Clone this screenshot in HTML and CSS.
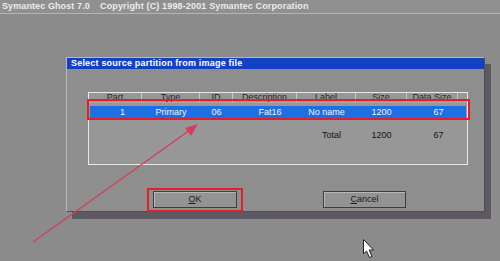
FILE: index.html
```html
<!DOCTYPE html>
<html lang="en">
<head>
    <meta charset="UTF-8">
    <meta name="viewport" content="width=device-width, initial-scale=1.0">
    <title>Symantec Ghost 7.0</title>
    <link rel="stylesheet" href="styles.css">
</head>
<body>
    <div class="topbar"><span class="product">Symantec Ghost 7.0</span><span class="copyright">Copyright (C) 1998-2001 Symantec Corporation</span></div>

    <div class="dialog">
        <div class="dialog-title">Select source partition from image file</div>
        <div class="dialog-body">
            <div class="table">
                <div class="row head">
                    <div>Part</div><div>Type</div><div>ID</div><div>Description</div><div>Label</div><div>Size</div><div>Data Size</div><div></div>
                </div>
                <div class="row selected">
                    <div class="c-part">1</div><div>Primary</div><div>06</div><div class="c-desc">Fat16</div><div>No name</div><div>1200</div><div class="c-data">67</div><div></div>
                </div>
                <div class="row total">
                    <div></div><div></div><div></div><div></div><div class="c-total">Total</div><div>1200</div><div class="c-data">67</div><div></div>
                </div>
                <div class="mark row-mark"></div>
            </div>
            <div class="buttons">
                <div class="btn btn-ok"><u>O</u>K<div class="mark ok-mark"></div></div>
                <div class="btn btn-cancel"><u>C</u>ancel</div>
            </div>
        </div>
    </div>

    <svg class="overlay" width="500" height="261" viewBox="0 0 500 261">
        <line x1="33" y1="242" x2="190" y2="130" stroke="#d4405a" stroke-width="1.4"/>
        <polygon points="198,124 185,128 191,136" fill="#d4405a"/>
        <path d="M363.5 239.5 L363.5 254 L366.5 251 L369.5 257.5 L372 256.5 L369.2 250 L373.5 250 Z" fill="#ffffff" stroke="#202020" stroke-width="1"/>
    </svg>
</body>
</html>
```

FILE: styles.css
```css
body {
    margin: 0;
    width: 500px;
    height: 261px;
    background: #8b8b8b;
    font-family: "Liberation Sans", Arial, sans-serif;
    overflow: hidden;
    position: relative;
}
.topbar {
    display: flex;
    height: 13px;
    line-height: 12px;
    padding-left: 2px;
    font-size: 9px;
    font-weight: bold;
    color: #ececec;
    background: #909090;
    border-bottom: 1px solid #b4b4b4;
    white-space: nowrap;
}
.product {
    flex: 0 0 98px;
    letter-spacing: 0.1px;
}
.copyright {
    letter-spacing: 0.15px;
}
.dialog {
    margin: 43px 0 0 66px;
    width: 417px;
    height: 153px;
    background: #8e8e8e;
    border: 1px solid #b8b8b8;
    border-right-color: #505050;
    border-bottom-color: #505050;
    box-shadow: 6px 7px 0 #5d5863;
}
.dialog-title {
    height: 11px;
    line-height: 11px;
    padding-left: 4px;
    background: #1441c4;
    color: #ffffff;
    font-size: 9px;
    font-weight: bold;
    letter-spacing: 0.2px;
    white-space: nowrap;
}
.dialog-body {
    padding: 23px 0 0 21px;
}
.table {
    position: relative;
    width: 378px;
    height: 71px;
    background: #979797;
    border: 1px solid #e8e8e8;
    font-size: 9px;
}
.row {
    display: grid;
    grid-template-columns: 53px 58px 33px 64px 59px 51px 51px 9px;
    white-space: nowrap;
}
.row > div {
    text-align: center;
}
.head {
    height: 9px;
    line-height: 8px;
    color: #2c2424;
    border-bottom: 1px solid #a8a8a8;
}
.head > div {
    border-right: 1px solid #c8c8c8;
}
.head > div:last-child {
    border-right: none;
}
.selected {
    margin: 3px 1px 0;
    height: 12px;
    line-height: 12px;
    background: #1d6fe6;
    color: #f4f4f4;
    grid-template-columns: 52px 58px 33px 64px 59px 51px 51px 8px;
}
.total {
    margin-top: 11px;
    height: 12px;
    line-height: 12px;
    color: #141414;
}
.c-part {
    text-align: right !important;
    padding-right: 17px;
}
.c-desc {
    padding-left: 10px;
}
.c-data {
    padding-left: 12px;
}
.c-total {
    padding-left: 10px;
}
.mark {
    position: absolute;
    border: 2px solid #e3202a;
}
.row-mark {
    left: -2px;
    top: 6px;
    width: 379px;
    height: 17px;
}
.buttons {
    display: flex;
    margin-top: 26px;
    padding-left: 65px;
    gap: 86px;
}
.btn {
    position: relative;
    height: 15px;
    line-height: 15px;
    text-align: center;
    font-size: 9px;
    color: #1a1a1a;
    background: #939393;
    border: 1px solid #3e3e3e;
    box-shadow: inset 1px 1px 0 #b8b8b8;
}
.btn-ok {
    width: 82px;
}
.btn-cancel {
    width: 81px;
}
.ok-mark {
    left: -7px;
    top: -4px;
    width: 92px;
    height: 20px;
}
.overlay {
    position: absolute;
    left: 0;
    top: 0;
}
```
